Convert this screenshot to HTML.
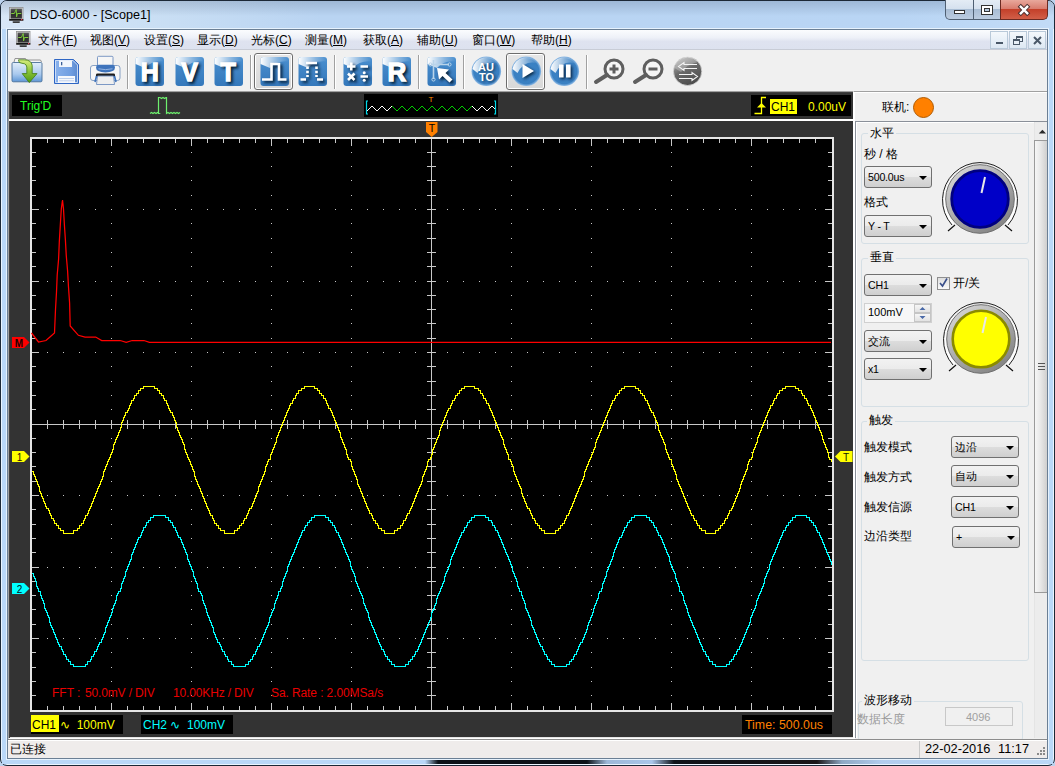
<!DOCTYPE html>
<html><head><meta charset="utf-8">
<style>
*{box-sizing:border-box}
html,body{margin:0;padding:0;width:1055px;height:766px;overflow:hidden;font-family:"Liberation Sans",sans-serif;font-size:12px;color:#000}
body{position:relative;background:#bcd3ee}
.a{position:absolute}
.t{position:absolute;white-space:nowrap;line-height:14px}
#winborder{left:0;top:0;width:1055px;height:766px;border:1px solid #1c2836;border-radius:7px 7px 7px 7px;background:#bad8f8;box-shadow:inset 0 0 0 1px #eaf5ff}
#titlebar{left:1px;top:1px;width:1053px;height:28px;background:linear-gradient(rgba(60,80,110,0.22),rgba(60,80,110,0.12) 7px,rgba(60,80,110,0) 15px),linear-gradient(90deg,#d8e7f7,#cadff4 150px,#b9d4f2 320px,#b9d5f4 900px,#c2dbf6);border-radius:6px 6px 0 0}
#innerhl{left:6px;top:28px;width:1043px;height:732px;border:1px solid #e6f2fd}
.capbtn{position:absolute;top:0;height:20px;border:1px solid #4f5f72;border-top:none}
#mdi{left:7px;top:29px;width:1041px;height:730px;background:#f0f0f0;border:1px solid #6b7f94}
#menubar{left:8px;top:30px;width:1039px;height:20px;background:linear-gradient(#fbfcfe,#eef1f8 40%,#dfe3f0 60%,#dde2ef);border-bottom:1px solid #c8ccd6}
.mi{position:absolute;top:33px;font-size:12px;line-height:14px}
#toolbar{left:8px;top:50px;width:1039px;height:42px;background:#f0f0f0}
.sep{position:absolute;top:55px;width:1px;height:34px;background:#a0a0a0;box-shadow:1px 0 0 #fff}
.press{position:absolute;top:53px;height:37px;border:1px solid #6d6d6d;border-radius:3px;background:linear-gradient(#e6e6e6,#d8d8d8);box-shadow:inset 0 0 0 1px #fff}
#scope{left:8px;top:91px;width:846px;height:648px;background:#333333;border-left:1px solid #a0a0a0;border-top:1px solid #a0a0a0;border-right:1px solid #fff;border-bottom:1px solid #fff;box-shadow:inset 1px 1px 0 #404040,inset 0 -1px 0 #e4e4e4}
#panel{left:854px;top:91px;width:193px;height:648px;background:#f0f0f0;border-top:1px solid #a0a0a0;box-shadow:inset 1px 1px 0 #fff}
.gb{position:absolute;border:1px solid #d5dfe5;border-radius:3px}
.gbt{position:absolute;background:#f0f0f0;padding:0 2px;line-height:14px}
.cb{position:absolute;height:22px;border:1px solid #707070;border-radius:3px;background:linear-gradient(#f2f2f2,#ebebeb 50%,#dddddd 50%,#cfcfcf);font-size:10.6px;line-height:20px;padding-left:3px;color:#000;letter-spacing:-0.2px}
.cb:after{content:"";position:absolute;right:4px;top:9px;border-left:4px solid transparent;border-right:4px solid transparent;border-top:4px solid #000}
#status{left:8px;top:739px;width:1039px;height:19px;background:#efeceb;border-top:1px solid #8c8c8c;box-shadow:inset 0 1px 0 #fff}
</style></head><body>
<div class="a" id="winborder"></div>
<div class="a" id="titlebar"></div>
<div class="a" id="innerhl"></div>
<div class="a" style="left:2px;top:760px;width:1051px;height:4px;background:linear-gradient(90deg,#bad8f8 0,#bad8f8 423px,#0c1218 436px,#0c1218 585px,#9db8d8 605px,#a9c6ea 650px,#0e1319 672px,#1a1618 815px,#8ea8c4 840px,#b2cdee 880px,#bad8f8 1051px)"></div>
<!-- title icon -->
<svg class="a" style="left:9px;top:7px" width="15" height="17">
 <defs><linearGradient id="scr7" x1="0" y1="0" x2="0" y2="1"><stop offset="0" stop-color="#5a5a5a"/><stop offset="0.5" stop-color="#2a2a2a"/><stop offset="1" stop-color="#3a3a3a"/></linearGradient></defs>
 <rect x="0.5" y="0.5" width="13.5" height="13" fill="#d9d9d9" stroke="#8f8f8f" stroke-width="0.8"/>
 <rect x="1.6" y="1.6" width="11.3" height="10" fill="url(#scr7)"/>
 <rect x="0.3" y="12" width="14" height="1.6" fill="#151515"/>
 <rect x="12" y="12.1" width="1.3" height="1.1" fill="#ff4060"/>
 <rect x="3.5" y="14.3" width="7.5" height="1.6" rx="0.8" fill="#3a3a3a"/>
 <path d="M2.2 6.5 H5.3 L6.3 4.5 L7.2 2.5 L7.6 9.8 L8.4 6.5 H12.3" stroke="#7ecb3a" stroke-width="1" fill="none"/>
</svg>
<div class="t" style="left:30px;top:8px;font-size:12.6px;color:#000">DSO-6000 - [Scope1]</div>
<!-- caption buttons -->
<div class="capbtn" style="left:945px;width:29px;background:linear-gradient(#e4ecf5,#d4e0ee 50%,#a9bdd4 50%,#bccce0);border-radius:0 0 0 5px"></div>
<div class="capbtn" style="left:973px;width:28px;background:linear-gradient(#e4ecf5,#d4e0ee 50%,#a9bdd4 50%,#bccce0)"></div>
<div class="capbtn" style="left:1000px;width:48px;background:linear-gradient(#e8a89c,#d7786a 50%,#c4402a 50%,#d25f48);border-color:#6b2a22;border-radius:0 0 5px 0"></div>
<div class="a" style="left:954px;top:10px;width:11px;height:4px;background:#fff;border:1px solid #333"></div>
<div class="a" style="left:981px;top:5px;width:12px;height:10px;border:1px solid #333;background:#fff"><div class="a" style="left:2px;top:2px;width:6px;height:4px;border:1px solid #333;background:#b6c8dc"></div></div>
<svg class="a" style="left:1016px;top:3px" width="16" height="14"><path d="M4.8 3.8 L11.2 10.2 M11.2 3.8 L4.8 10.2" stroke="#4a3030" stroke-width="4.4" stroke-linecap="square"/><path d="M4.8 3.8 L11.2 10.2 M11.2 3.8 L4.8 10.2" stroke="#fff" stroke-width="2.4" stroke-linecap="square"/></svg>

<div class="a" id="mdi"></div>
<div class="a" id="menubar"></div>
<!-- menu icon -->
<svg class="a" style="left:16px;top:31px" width="15" height="17">
 <defs><linearGradient id="scr31" x1="0" y1="0" x2="0" y2="1"><stop offset="0" stop-color="#5a5a5a"/><stop offset="0.5" stop-color="#2a2a2a"/><stop offset="1" stop-color="#3a3a3a"/></linearGradient></defs>
 <rect x="0.5" y="0.5" width="13.5" height="13" fill="#d9d9d9" stroke="#8f8f8f" stroke-width="0.8"/>
 <rect x="1.6" y="1.6" width="11.3" height="10" fill="url(#scr31)"/>
 <rect x="0.3" y="12" width="14" height="1.6" fill="#151515"/>
 <rect x="12" y="12.1" width="1.3" height="1.1" fill="#ff4060"/>
 <rect x="3.5" y="14.3" width="7.5" height="1.6" rx="0.8" fill="#3a3a3a"/>
 <path d="M2.2 6.5 H5.3 L6.3 4.5 L7.2 2.5 L7.6 9.8 L8.4 6.5 H12.3" stroke="#7ecb3a" stroke-width="1" fill="none"/>
</svg>
<div class="mi" style="left:38px">文件(<u>F</u>)</div>
<div class="mi" style="left:90px">视图(<u>V</u>)</div>
<div class="mi" style="left:144px">设置(<u>S</u>)</div>
<div class="mi" style="left:197px">显示(<u>D</u>)</div>
<div class="mi" style="left:251px">光标(<u>C</u>)</div>
<div class="mi" style="left:305px">测量(<u>M</u>)</div>
<div class="mi" style="left:363px">获取(<u>A</u>)</div>
<div class="mi" style="left:417px">辅助(<u>U</u>)</div>
<div class="mi" style="left:472px">窗口(<u>W</u>)</div>
<div class="mi" style="left:531px">帮助(<u>H</u>)</div>
<!-- mdi buttons -->
<div class="a" style="left:990px;top:31px;width:18px;height:18px;border:1px solid #b9c9d9;background:linear-gradient(#f4f8fc,#dde8f3)"><div class="a" style="left:5px;top:10px;width:7px;height:2px;background:#4a5868"></div></div>
<div class="a" style="left:1009px;top:31px;width:18px;height:18px;border:1px solid #b9c9d9;background:linear-gradient(#f4f8fc,#dde8f3)"><div class="a" style="left:6px;top:4px;width:7px;height:6px;border:1px solid #4a5868;border-top-width:2px"></div><div class="a" style="left:3px;top:7px;width:7px;height:6px;border:1px solid #4a5868;border-top-width:2px;background:#e6eef6"></div></div>
<div class="a" style="left:1028px;top:31px;width:18px;height:18px;border:1px solid #b9c9d9;background:linear-gradient(#f4f8fc,#dde8f3)"><svg class="a" style="left:3px;top:3px" width="11" height="11"><path d="M2 2 L9 9 M9 2 L2 9" stroke="#4a5868" stroke-width="2"/></svg></div>

<div class="a" id="toolbar"></div>
<div class="press" style="left:254px;width:39px"></div>
<div class="press" style="left:506px;width:39px"></div>
<!-- open folder -->
<svg class="a" style="left:10px;top:55px" width="34" height="31">
 <defs><linearGradient id="fold" x1="0" y1="0" x2="0" y2="1"><stop offset="0" stop-color="#e2eefa"/><stop offset="0.6" stop-color="#a9c9ee"/><stop offset="1" stop-color="#5f97d6"/></linearGradient>
 <linearGradient id="grn" x1="0" y1="0" x2="0" y2="1"><stop offset="0" stop-color="#d8ee80"/><stop offset="0.5" stop-color="#8cc43a"/><stop offset="1" stop-color="#4e9a10"/></linearGradient></defs>
 <path d="M4 7 L5 3.5 H15.5 L16 5 H30.5 L31.5 7" fill="#f4f4f4" stroke="#8a8a8a" stroke-width="0.9"/>
 <rect x="2" y="7.5" width="30" height="19.3" rx="1.2" fill="url(#fold)" stroke="#4a6f98" stroke-width="0.9"/>
 <path d="M8.5 4.8 Q8.5 6 9.5 7.6 Q12 8.4 14.5 8.8 Q16.5 9.5 16.8 12 V18.6 H12.2 L19.3 27.6 L27 18.6 H22.2 V10.5 Q21.5 4.8 14 4.8 Z" fill="url(#grn)" stroke="#3f7a10" stroke-width="0.8"/>
</svg>
<!-- save -->
<svg class="a" style="left:54px;top:59px" width="26" height="26">
 <defs><linearGradient id="flp" x1="0" y1="0" x2="1" y2="0"><stop offset="0" stop-color="#8ab2ec"/><stop offset="0.7" stop-color="#6f9de0"/><stop offset="1" stop-color="#5a88cc"/></linearGradient></defs>
 <path d="M0.5 0.5 H19.5 L24.5 5.5 V24.5 H0.5 Z" fill="url(#flp)" stroke="#2f66c4"/>
 <path d="M1.5 1.5 H19 L23.5 6 V23.5 H1.5 Z" fill="none" stroke="#dce8fa" stroke-width="0.8"/>
 <rect x="5" y="1.3" width="13" height="6.7" fill="#f2f6fc"/>
 <rect x="7" y="3" width="1.3" height="3.3" fill="#3a5f98"/>
 <rect x="4" y="17" width="17" height="7" fill="#f6f8fc"/>
 <path d="M5 19.5 H20 M5 21.8 H20" stroke="#b8cbea" stroke-width="0.9"/>
</svg>
<!-- printer -->
<svg class="a" style="left:89px;top:55px" width="33" height="31">
 <rect x="8.5" y="1.3" width="15.5" height="10.5" rx="1" fill="#f6f6f6" stroke="#6f8fbf" stroke-width="0.9"/>
 <rect x="1.5" y="10.5" width="29.5" height="15" rx="2.5" fill="#f7f7f7" stroke="#7b97c0" stroke-width="0.9"/>
 <path d="M7 12.5 Q7 10 9.5 9.8 H23.5 Q26 10 26 12.5 Q26 17.2 16.5 17.5 Q7 17.2 7 12.5 Z" fill="#3f74bc"/>
 <path d="M9.5 13.8 Q16.5 15.5 23.5 13.8" stroke="#9dbbe6" stroke-width="0.9" fill="none"/>
 <path d="M7 19.5 Q7 18.5 8.5 18.5 H24.5 Q26 18.5 26 19.5 V22 H7 Z" fill="#1e1e1e"/>
 <path d="M8.5 21 H24.5 L25.5 29.5 H7.5 Z" fill="#efefef" stroke="#6f8fbf" stroke-width="0.9"/>
 <path d="M7.5 21 L6 27 M25.5 21 L27 27" stroke="#3f74bc" stroke-width="1.6"/>
</svg>
<div class="sep" style="left:127px"></div>
<svg width="0" height="0" style="position:absolute"><defs>
<filter id="sh" x="-30%" y="-30%" width="160%" height="160%"><feGaussianBlur stdDeviation="1.6"/></filter>
<linearGradient id="gl" x1="0" y1="0" x2="1" y2="0"><stop offset="0" stop-color="#ffffff" stop-opacity="1"/><stop offset="0.6" stop-color="#ffffff" stop-opacity="0.35"/><stop offset="1" stop-color="#ffffff" stop-opacity="0"/></linearGradient>
<linearGradient id="bb" x1="0" y1="0" x2="0" y2="1"><stop offset="0" stop-color="#4a8fcf"/><stop offset="1" stop-color="#3478bb"/></linearGradient>
<radialGradient id="rb" cx="0.5" cy="0.5" r="0.5"><stop offset="0" stop-color="#3d84c6"/><stop offset="0.85" stop-color="#3a80c2"/><stop offset="1" stop-color="#8fbbe6"/></radialGradient>
</defs></svg><svg class="a" style="left:134px;top:56px" width="31" height="31">
  <rect x="1.5" y="1" width="28.5" height="29" rx="3" fill="url(#bb)"/>
  <path d="M1.5 4 Q1.5 1 4.5 1 H27 Q30 1 30 4 V5.5 Q18 4 11 12 L1.5 8 Z" fill="url(#gl)"/>
  <g filter="url(#sh)" opacity="1" transform="translate(2,2)"><text x="15.8" y="24.5" text-anchor="middle" font-family="Liberation Sans" font-weight="bold" font-size="25" fill="#04182e" stroke="#04182e" stroke-width="1.3">H</text></g>
  <text x="15.8" y="24.5" text-anchor="middle" font-family="Liberation Sans" font-weight="bold" font-size="25" fill="#fff" stroke="#fff" stroke-width="1.3">H</text>
 </svg><svg class="a" style="left:174px;top:56px" width="31" height="31">
  <rect x="1.5" y="1" width="28.5" height="29" rx="3" fill="url(#bb)"/>
  <path d="M1.5 4 Q1.5 1 4.5 1 H27 Q30 1 30 4 V5.5 Q18 4 11 12 L1.5 8 Z" fill="url(#gl)"/>
  <g filter="url(#sh)" opacity="1" transform="translate(2,2)"><text x="15.6" y="24.5" text-anchor="middle" font-family="Liberation Sans" font-weight="bold" font-size="25" fill="#04182e" stroke="#04182e" stroke-width="1.3">V</text></g>
  <text x="15.6" y="24.5" text-anchor="middle" font-family="Liberation Sans" font-weight="bold" font-size="25" fill="#fff" stroke="#fff" stroke-width="1.3">V</text>
 </svg><svg class="a" style="left:213px;top:56px" width="31" height="31">
  <rect x="1.5" y="1" width="28.5" height="29" rx="3" fill="url(#bb)"/>
  <path d="M1.5 4 Q1.5 1 4.5 1 H27 Q30 1 30 4 V5.5 Q18 4 11 12 L1.5 8 Z" fill="url(#gl)"/>
  <g filter="url(#sh)" opacity="1" transform="translate(2,2)"><text x="15.2" y="24.5" text-anchor="middle" font-family="Liberation Sans" font-weight="bold" font-size="25" fill="#04182e" stroke="#04182e" stroke-width="1.3">T</text></g>
  <text x="15.2" y="24.5" text-anchor="middle" font-family="Liberation Sans" font-weight="bold" font-size="25" fill="#fff" stroke="#fff" stroke-width="1.3">T</text>
 </svg><svg class="a" style="left:259px;top:56px" width="31" height="31">
  <rect x="1.5" y="1" width="28.5" height="29" rx="3" fill="url(#bb)"/>
  <path d="M1.5 4 Q1.5 1 4.5 1 H27 Q30 1 30 4 V5.5 Q18 4 11 12 L1.5 8 Z" fill="url(#gl)"/>
  <g filter="url(#sh)" opacity="1" transform="translate(2,2)"><path d="M3 23.5 H12.5 V8 H20 V23.5 H27.5" stroke="#04182e" stroke-width="2.6" fill="none"/></g>
  <path d="M3 23.5 H12.5 V8 H20 V23.5 H27.5" stroke="#fff" stroke-width="2.6" fill="none"/>
 </svg><svg class="a" style="left:297px;top:56px" width="31" height="31">
  <rect x="1.5" y="1" width="28.5" height="29" rx="3" fill="url(#bb)"/>
  <path d="M1.5 4 Q1.5 1 4.5 1 H27 Q30 1 30 4 V5.5 Q18 4 11 12 L1.5 8 Z" fill="url(#gl)"/>
  <g filter="url(#sh)" opacity="1" transform="translate(2,2)"><path d="M3.5 23.5 H9 M20 23.5 H26 M9 7 H20" stroke="#04182e" stroke-width="2.6" fill="none"/><path d="M10.5 10.5 V21 M19.5 10.5 V21" stroke="#04182e" stroke-width="2.6" stroke-dasharray="2.6 1.6" fill="none"/></g>
  <path d="M3.5 23.5 H9 M20 23.5 H26 M9 7 H20" stroke="#fff" stroke-width="2.6" fill="none"/><path d="M10.5 10.5 V21 M19.5 10.5 V21" stroke="#fff" stroke-width="2.6" stroke-dasharray="2.6 1.6" fill="none"/>
 </svg><svg class="a" style="left:342px;top:56px" width="31" height="31">
  <rect x="1.5" y="1" width="28.5" height="29" rx="3" fill="url(#bb)"/>
  <path d="M1.5 4 Q1.5 1 4.5 1 H27 Q30 1 30 4 V5.5 Q18 4 11 12 L1.5 8 Z" fill="url(#gl)"/>
  <g filter="url(#sh)" opacity="1" transform="translate(2,2)"><path d="M5 10.5 H13.5 M9.25 6.5 V14.5 M18.5 10.5 H26 M6 17.5 L12.5 24 M12.5 17.5 L6 24 M18.5 20.5 H26" stroke="#04182e" stroke-width="2.6" fill="none"/><circle cx="22.2" cy="16.8" r="1.5" fill="#04182e"/><circle cx="22.2" cy="24.2" r="1.5" fill="#04182e"/></g>
  <path d="M5 10.5 H13.5 M9.25 6.5 V14.5 M18.5 10.5 H26 M6 17.5 L12.5 24 M12.5 17.5 L6 24 M18.5 20.5 H26" stroke="#fff" stroke-width="2.6" fill="none"/><circle cx="22.2" cy="16.8" r="1.5" fill="#fff"/><circle cx="22.2" cy="24.2" r="1.5" fill="#fff"/>
 </svg><svg class="a" style="left:381px;top:56px" width="31" height="31">
  <rect x="1.5" y="1" width="28.5" height="29" rx="3" fill="url(#bb)"/>
  <path d="M1.5 4 Q1.5 1 4.5 1 H27 Q30 1 30 4 V5.5 Q18 4 11 12 L1.5 8 Z" fill="url(#gl)"/>
  <g filter="url(#sh)" opacity="1" transform="translate(2,2)"><text x="15.8" y="25" text-anchor="middle" font-family="Liberation Sans" font-weight="bold" font-size="26" fill="#04182e" stroke="#04182e" stroke-width="1.3">R</text></g>
  <text x="15.8" y="25" text-anchor="middle" font-family="Liberation Sans" font-weight="bold" font-size="26" fill="#fff" stroke="#fff" stroke-width="1.3">R</text>
 </svg><svg class="a" style="left:426px;top:56px" width="31" height="31">
  <rect x="1.5" y="1" width="28.5" height="29" rx="3" fill="url(#bb)"/>
  <path d="M1.5 4 Q1.5 1 4.5 1 H27 Q30 1 30 4 V5.5 Q18 4 11 12 L1.5 8 Z" fill="url(#gl)"/>
  <g filter="url(#sh)" opacity="1" transform="translate(2,2)"><path d="M11 12 L23 13.5 L19.5 17 L26.5 23.5 L23.5 26.5 L16.5 20 L13 23.5 Z" fill="#04182e"/></g>
  <path d="M7.5 4 V23 M5 8.5 H23" stroke="#b9d4ea" stroke-width="1.6" fill="none"/><circle cx="4.5" cy="8.5" r="1.6" fill="none" stroke="#b9d4ea"/><circle cx="23.5" cy="8.5" r="1.6" fill="none" stroke="#b9d4ea"/><circle cx="7.5" cy="23.5" r="1.6" fill="none" stroke="#b9d4ea"/><path d="M11 12 L23 13.5 L19.5 17 L26.5 23.5 L23.5 26.5 L16.5 20 L13 23.5 Z" fill="#fff"/>
 </svg>
<div class="sep" style="left:250px"></div>
<div class="sep" style="left:334px"></div>
<div class="sep" style="left:418px"></div>
<div class="sep" style="left:463px"></div>
<svg class="a" style="left:470px;top:55px" width="32" height="32">
  <circle cx="16.3" cy="16.2" r="14.8" fill="url(#rb)"/>
  <path d="M2.5 14 A14 14 0 0 1 28 8.5 Q20 6 14 10 Q10 13 7.5 18 Z" fill="url(#gl)"/>
  <g filter="url(#sh)" opacity="0.85" transform="translate(1.6,1.6)"><text x="16" y="15.5" text-anchor="middle" font-family="Liberation Sans" font-weight="bold" font-size="11" fill="#04182e">AU</text><text x="16.5" y="25.5" text-anchor="middle" font-family="Liberation Sans" font-weight="bold" font-size="11" fill="#04182e">TO</text></g>
  <text x="16" y="15.5" text-anchor="middle" font-family="Liberation Sans" font-weight="bold" font-size="11" fill="#fff">AU</text><text x="16.5" y="25.5" text-anchor="middle" font-family="Liberation Sans" font-weight="bold" font-size="11" fill="#fff">TO</text></svg><svg class="a" style="left:510px;top:55px" width="32" height="32">
  <circle cx="16.3" cy="16.2" r="14.8" fill="url(#rb)"/>
  <path d="M2.5 14 A14 14 0 0 1 28 8.5 Q20 6 14 10 Q10 13 7.5 18 Z" fill="url(#gl)"/>
  <g filter="url(#sh)" opacity="0.85" transform="translate(1.6,1.6)"><path d="M12.5 9 L24 16 L12.5 23 Z" fill="#04182e"/></g>
  <path d="M12.5 9 L24 16 L12.5 23 Z" fill="#fff"/></svg><svg class="a" style="left:548px;top:55px" width="32" height="32">
  <circle cx="16.3" cy="16.2" r="14.8" fill="url(#rb)"/>
  <path d="M2.5 14 A14 14 0 0 1 28 8.5 Q20 6 14 10 Q10 13 7.5 18 Z" fill="url(#gl)"/>
  <g filter="url(#sh)" opacity="0.85" transform="translate(1.6,1.6)"><rect x="11" y="9.5" width="4.6" height="13" fill="#04182e"/><rect x="18" y="9.5" width="4.6" height="13" fill="#04182e"/></g>
  <rect x="11" y="9.5" width="4.6" height="13" fill="#fff"/><rect x="18" y="9.5" width="4.6" height="13" fill="#fff"/></svg>
<div class="sep" style="left:586px"></div>
<!-- zoom in/out -->
<svg class="a" style="left:592px;top:55px" width="34" height="30">
 <circle cx="22" cy="14" r="9" fill="#f6f6f6" stroke="#5f5f5f" stroke-width="3"/>
 <path d="M4 27 L15 20" stroke="#5f5f5f" stroke-width="4" stroke-linecap="round"/>
 <path d="M17.5 14 H26.5 M22 9.5 V18.5" stroke="#5f5f5f" stroke-width="3"/>
</svg>
<svg class="a" style="left:631px;top:55px" width="34" height="30">
 <circle cx="22" cy="14" r="9" fill="#f6f6f6" stroke="#5f5f5f" stroke-width="3"/>
 <path d="M4 27 L15 20" stroke="#5f5f5f" stroke-width="4" stroke-linecap="round"/>
 <path d="M17.5 14 H26.5" stroke="#5f5f5f" stroke-width="3"/>
</svg>
<svg class="a" style="left:672px;top:55px" width="32" height="32">
 <defs><linearGradient id="gr" x1="0.2" y1="0" x2="0.7" y2="1"><stop offset="0" stop-color="#b8b8b8"/><stop offset="0.45" stop-color="#6a6a6a"/><stop offset="1" stop-color="#4a4a4a"/></linearGradient></defs>
 <circle cx="15.6" cy="16.3" r="14.2" fill="url(#gr)" stroke="#d8d8d8" stroke-width="0.8"/>
 <path d="M2.5 13 A13.5 13.5 0 0 1 26 7 Q16 9 9 17 Z" fill="#fff" opacity="0.25"/>
 <path d="M25 9.5 H12 V7.5 L6.5 11.5 L12 15.5 V13.5 H25" fill="none" stroke="#f4f4f4" stroke-width="1.1"/>
 <path d="M7 23.5 H20 V25.5 L25.5 21.5 L20 17.5 V19.5 H7" fill="none" stroke="#f4f4f4" stroke-width="1.1"/>
</svg>


<div class="a" id="scope"></div>
<div class="a" style="left:12px;top:95px;width:50px;height:21px;background:#000"></div>
<div class="t" style="left:20px;top:99px;color:#22ff22;font-size:12px">Trig'D</div>
<svg class="a" style="left:148px;top:94px" width="34" height="22"><path d="M2 19.5 L3.5 18.5 L5.0 19.5 L6.5 18.5 L8.0 19.5 L9.5 18.5 L11.0 19.5 L10.5 19.5 L10.5 3.5 L12.0 3.5 L13.5 4.5 L15.0 3.5 L16.5 4.5 L18.0 3.5 L18.5 3.5 L18.5 19.5 L20.0 18.5 L21.5 19.5 L23.0 18.5 L24.5 19.5 L26.0 18.5 L27.5 19.5 L29.0 18.5 L30.5 19.5 L32.0 18.5" stroke="#6ef06e" stroke-width="1.2" fill="none"/></svg>
<div class="a" style="left:364px;top:94px;width:134px;height:23px;background:#000"></div>
<svg class="a" style="left:364px;top:94px" width="134" height="23">
 <path d="M4 7 H2.5 V20 H4 M130 7 H131.5 V20 H130" stroke="#00d8e8" stroke-width="1.2" fill="none"/>
 <path d="M3 17 L8 12 L13 17 L18 12 L23 17 L28 12" stroke="#fff" fill="none" stroke-width="1"/>
 <path d="M28 12 L33 17 L38 12 L43 17 L48 12 L53 17 L58 12 L63 17 L68 12 L73 17 L78 12 L83 17 L88 12 L93 17 L98 12 L103 17 L108 12" stroke="#00d000" fill="none" stroke-width="1"/>
 <path d="M108 12 L113 17 L118 12 L123 17 L128 12 L131 15" stroke="#fff" fill="none" stroke-width="1"/>
 <text x="67" y="8" text-anchor="middle" font-family="Liberation Sans" font-size="8" fill="#ff8c00">T</text>
</svg>
<div class="a" style="left:751px;top:95px;width:100px;height:21px;background:#000"></div>
<svg class="a" style="left:751px;top:95px" width="20" height="21"><path d="M3.5 18.5 H10.5 V2.5 H15" stroke="#ffff00" stroke-width="1.3" fill="none"/><path d="M6 12.5 L10.5 8 L15 12.5 Z" fill="#ffff00"/></svg>
<div class="a" style="left:770px;top:99px;width:27px;height:15px;background:#ffff00"></div>
<div class="t" style="left:771px;top:100px;color:#000;font-size:12px">CH1</div>
<div class="t" style="left:808px;top:100px;color:#ffff00;font-size:12px">0.00uV</div>
<div class="a" style="left:9px;top:119px;width:844px;height:2px;background:#fff"></div>
<svg class="a" style="left:426px;top:122px" width="12" height="15"><path d="M0 0 H11.5 V10 L5.75 15 L0 10 Z" fill="#ff8000"/><text x="6" y="10" text-anchor="middle" font-family="Liberation Sans" font-size="10.5" fill="#000">T</text></svg>

<svg class="a" style="left:0;top:0" width="1055" height="766">
<rect x="30" y="137" width="804" height="575" fill="#000"/>
<path d="M30 137h804v2h-804z M30 710h804v2h-804z M30 137h2v575h-2z M832 137h2v575h-2z" fill="#e6e6e6"/>
<path d="M32 424h800v1h-800zM431 139h1v571h-1zM47 139h1v4h-1zM47 706h1v4h-1zM47 420h1v9h-1zM63 139h1v4h-1zM63 706h1v4h-1zM63 420h1v9h-1zM79 139h1v4h-1zM79 706h1v4h-1zM79 420h1v9h-1zM95 139h1v4h-1zM95 706h1v4h-1zM95 420h1v9h-1zM111 139h1v7h-1zM111 703h1v7h-1zM111 420h1v9h-1zM127 139h1v4h-1zM127 706h1v4h-1zM127 420h1v9h-1zM143 139h1v4h-1zM143 706h1v4h-1zM143 420h1v9h-1zM159 139h1v4h-1zM159 706h1v4h-1zM159 420h1v9h-1zM175 139h1v4h-1zM175 706h1v4h-1zM175 420h1v9h-1zM191 139h1v7h-1zM191 703h1v7h-1zM191 420h1v9h-1zM207 139h1v4h-1zM207 706h1v4h-1zM207 420h1v9h-1zM223 139h1v4h-1zM223 706h1v4h-1zM223 420h1v9h-1zM239 139h1v4h-1zM239 706h1v4h-1zM239 420h1v9h-1zM255 139h1v4h-1zM255 706h1v4h-1zM255 420h1v9h-1zM271 139h1v7h-1zM271 703h1v7h-1zM271 420h1v9h-1zM287 139h1v4h-1zM287 706h1v4h-1zM287 420h1v9h-1zM303 139h1v4h-1zM303 706h1v4h-1zM303 420h1v9h-1zM319 139h1v4h-1zM319 706h1v4h-1zM319 420h1v9h-1zM335 139h1v4h-1zM335 706h1v4h-1zM335 420h1v9h-1zM351 139h1v7h-1zM351 703h1v7h-1zM351 420h1v9h-1zM367 139h1v4h-1zM367 706h1v4h-1zM367 420h1v9h-1zM383 139h1v4h-1zM383 706h1v4h-1zM383 420h1v9h-1zM399 139h1v4h-1zM399 706h1v4h-1zM399 420h1v9h-1zM415 139h1v4h-1zM415 706h1v4h-1zM415 420h1v9h-1zM431 139h1v7h-1zM431 703h1v7h-1zM431 420h1v9h-1zM447 139h1v4h-1zM447 706h1v4h-1zM447 420h1v9h-1zM463 139h1v4h-1zM463 706h1v4h-1zM463 420h1v9h-1zM479 139h1v4h-1zM479 706h1v4h-1zM479 420h1v9h-1zM495 139h1v4h-1zM495 706h1v4h-1zM495 420h1v9h-1zM511 139h1v7h-1zM511 703h1v7h-1zM511 420h1v9h-1zM527 139h1v4h-1zM527 706h1v4h-1zM527 420h1v9h-1zM543 139h1v4h-1zM543 706h1v4h-1zM543 420h1v9h-1zM559 139h1v4h-1zM559 706h1v4h-1zM559 420h1v9h-1zM575 139h1v4h-1zM575 706h1v4h-1zM575 420h1v9h-1zM591 139h1v7h-1zM591 703h1v7h-1zM591 420h1v9h-1zM607 139h1v4h-1zM607 706h1v4h-1zM607 420h1v9h-1zM623 139h1v4h-1zM623 706h1v4h-1zM623 420h1v9h-1zM639 139h1v4h-1zM639 706h1v4h-1zM639 420h1v9h-1zM655 139h1v4h-1zM655 706h1v4h-1zM655 420h1v9h-1zM671 139h1v7h-1zM671 703h1v7h-1zM671 420h1v9h-1zM687 139h1v4h-1zM687 706h1v4h-1zM687 420h1v9h-1zM703 139h1v4h-1zM703 706h1v4h-1zM703 420h1v9h-1zM719 139h1v4h-1zM719 706h1v4h-1zM719 420h1v9h-1zM735 139h1v4h-1zM735 706h1v4h-1zM735 420h1v9h-1zM751 139h1v7h-1zM751 703h1v7h-1zM751 420h1v9h-1zM767 139h1v4h-1zM767 706h1v4h-1zM767 420h1v9h-1zM783 139h1v4h-1zM783 706h1v4h-1zM783 420h1v9h-1zM799 139h1v4h-1zM799 706h1v4h-1zM799 420h1v9h-1zM815 139h1v4h-1zM815 706h1v4h-1zM815 420h1v9h-1zM32 152h4v1h-4zM828 152h4v1h-4zM427 152h9v1h-9zM32 166h4v1h-4zM828 166h4v1h-4zM427 166h9v1h-9zM32 180h4v1h-4zM828 180h4v1h-4zM427 180h9v1h-9zM32 195h4v1h-4zM828 195h4v1h-4zM427 195h9v1h-9zM32 209h7v1h-7zM825 209h7v1h-7zM427 209h9v1h-9zM32 223h4v1h-4zM828 223h4v1h-4zM427 223h9v1h-9zM32 238h4v1h-4zM828 238h4v1h-4zM427 238h9v1h-9zM32 252h4v1h-4zM828 252h4v1h-4zM427 252h9v1h-9zM32 266h4v1h-4zM828 266h4v1h-4zM427 266h9v1h-9zM32 281h7v1h-7zM825 281h7v1h-7zM427 281h9v1h-9zM32 295h4v1h-4zM828 295h4v1h-4zM427 295h9v1h-9zM32 309h4v1h-4zM828 309h4v1h-4zM427 309h9v1h-9zM32 323h4v1h-4zM828 323h4v1h-4zM427 323h9v1h-9zM32 338h4v1h-4zM828 338h4v1h-4zM427 338h9v1h-9zM32 352h7v1h-7zM825 352h7v1h-7zM427 352h9v1h-9zM32 366h4v1h-4zM828 366h4v1h-4zM427 366h9v1h-9zM32 381h4v1h-4zM828 381h4v1h-4zM427 381h9v1h-9zM32 395h4v1h-4zM828 395h4v1h-4zM427 395h9v1h-9zM32 409h4v1h-4zM828 409h4v1h-4zM427 409h9v1h-9zM32 424h7v1h-7zM825 424h7v1h-7zM427 424h9v1h-9zM32 438h4v1h-4zM828 438h4v1h-4zM427 438h9v1h-9zM32 452h4v1h-4zM828 452h4v1h-4zM427 452h9v1h-9zM32 466h4v1h-4zM828 466h4v1h-4zM427 466h9v1h-9zM32 481h4v1h-4zM828 481h4v1h-4zM427 481h9v1h-9zM32 495h7v1h-7zM825 495h7v1h-7zM427 495h9v1h-9zM32 509h4v1h-4zM828 509h4v1h-4zM427 509h9v1h-9zM32 524h4v1h-4zM828 524h4v1h-4zM427 524h9v1h-9zM32 538h4v1h-4zM828 538h4v1h-4zM427 538h9v1h-9zM32 552h4v1h-4zM828 552h4v1h-4zM427 552h9v1h-9zM32 567h7v1h-7zM825 567h7v1h-7zM427 567h9v1h-9zM32 581h4v1h-4zM828 581h4v1h-4zM427 581h9v1h-9zM32 595h4v1h-4zM828 595h4v1h-4zM427 595h9v1h-9zM32 609h4v1h-4zM828 609h4v1h-4zM427 609h9v1h-9zM32 624h4v1h-4zM828 624h4v1h-4zM427 624h9v1h-9zM32 638h7v1h-7zM825 638h7v1h-7zM427 638h9v1h-9zM32 652h4v1h-4zM828 652h4v1h-4zM427 652h9v1h-9zM32 667h4v1h-4zM828 667h4v1h-4zM427 667h9v1h-9zM32 681h4v1h-4zM828 681h4v1h-4zM427 681h9v1h-9zM32 695h4v1h-4zM828 695h4v1h-4zM427 695h9v1h-9zM111 152h1v1h-1zM111 166h1v1h-1zM111 180h1v1h-1zM111 195h1v1h-1zM111 209h1v1h-1zM111 223h1v1h-1zM111 238h1v1h-1zM111 252h1v1h-1zM111 266h1v1h-1zM111 281h1v1h-1zM111 295h1v1h-1zM111 309h1v1h-1zM111 323h1v1h-1zM111 338h1v1h-1zM111 352h1v1h-1zM111 366h1v1h-1zM111 381h1v1h-1zM111 395h1v1h-1zM111 409h1v1h-1zM111 424h1v1h-1zM111 438h1v1h-1zM111 452h1v1h-1zM111 466h1v1h-1zM111 481h1v1h-1zM111 495h1v1h-1zM111 509h1v1h-1zM111 524h1v1h-1zM111 538h1v1h-1zM111 552h1v1h-1zM111 567h1v1h-1zM111 581h1v1h-1zM111 595h1v1h-1zM111 609h1v1h-1zM111 624h1v1h-1zM111 638h1v1h-1zM111 652h1v1h-1zM111 667h1v1h-1zM111 681h1v1h-1zM111 695h1v1h-1zM191 152h1v1h-1zM191 166h1v1h-1zM191 180h1v1h-1zM191 195h1v1h-1zM191 209h1v1h-1zM191 223h1v1h-1zM191 238h1v1h-1zM191 252h1v1h-1zM191 266h1v1h-1zM191 281h1v1h-1zM191 295h1v1h-1zM191 309h1v1h-1zM191 323h1v1h-1zM191 338h1v1h-1zM191 352h1v1h-1zM191 366h1v1h-1zM191 381h1v1h-1zM191 395h1v1h-1zM191 409h1v1h-1zM191 424h1v1h-1zM191 438h1v1h-1zM191 452h1v1h-1zM191 466h1v1h-1zM191 481h1v1h-1zM191 495h1v1h-1zM191 509h1v1h-1zM191 524h1v1h-1zM191 538h1v1h-1zM191 552h1v1h-1zM191 567h1v1h-1zM191 581h1v1h-1zM191 595h1v1h-1zM191 609h1v1h-1zM191 624h1v1h-1zM191 638h1v1h-1zM191 652h1v1h-1zM191 667h1v1h-1zM191 681h1v1h-1zM191 695h1v1h-1zM271 152h1v1h-1zM271 166h1v1h-1zM271 180h1v1h-1zM271 195h1v1h-1zM271 209h1v1h-1zM271 223h1v1h-1zM271 238h1v1h-1zM271 252h1v1h-1zM271 266h1v1h-1zM271 281h1v1h-1zM271 295h1v1h-1zM271 309h1v1h-1zM271 323h1v1h-1zM271 338h1v1h-1zM271 352h1v1h-1zM271 366h1v1h-1zM271 381h1v1h-1zM271 395h1v1h-1zM271 409h1v1h-1zM271 424h1v1h-1zM271 438h1v1h-1zM271 452h1v1h-1zM271 466h1v1h-1zM271 481h1v1h-1zM271 495h1v1h-1zM271 509h1v1h-1zM271 524h1v1h-1zM271 538h1v1h-1zM271 552h1v1h-1zM271 567h1v1h-1zM271 581h1v1h-1zM271 595h1v1h-1zM271 609h1v1h-1zM271 624h1v1h-1zM271 638h1v1h-1zM271 652h1v1h-1zM271 667h1v1h-1zM271 681h1v1h-1zM271 695h1v1h-1zM351 152h1v1h-1zM351 166h1v1h-1zM351 180h1v1h-1zM351 195h1v1h-1zM351 209h1v1h-1zM351 223h1v1h-1zM351 238h1v1h-1zM351 252h1v1h-1zM351 266h1v1h-1zM351 281h1v1h-1zM351 295h1v1h-1zM351 309h1v1h-1zM351 323h1v1h-1zM351 338h1v1h-1zM351 352h1v1h-1zM351 366h1v1h-1zM351 381h1v1h-1zM351 395h1v1h-1zM351 409h1v1h-1zM351 424h1v1h-1zM351 438h1v1h-1zM351 452h1v1h-1zM351 466h1v1h-1zM351 481h1v1h-1zM351 495h1v1h-1zM351 509h1v1h-1zM351 524h1v1h-1zM351 538h1v1h-1zM351 552h1v1h-1zM351 567h1v1h-1zM351 581h1v1h-1zM351 595h1v1h-1zM351 609h1v1h-1zM351 624h1v1h-1zM351 638h1v1h-1zM351 652h1v1h-1zM351 667h1v1h-1zM351 681h1v1h-1zM351 695h1v1h-1zM511 152h1v1h-1zM511 166h1v1h-1zM511 180h1v1h-1zM511 195h1v1h-1zM511 209h1v1h-1zM511 223h1v1h-1zM511 238h1v1h-1zM511 252h1v1h-1zM511 266h1v1h-1zM511 281h1v1h-1zM511 295h1v1h-1zM511 309h1v1h-1zM511 323h1v1h-1zM511 338h1v1h-1zM511 352h1v1h-1zM511 366h1v1h-1zM511 381h1v1h-1zM511 395h1v1h-1zM511 409h1v1h-1zM511 424h1v1h-1zM511 438h1v1h-1zM511 452h1v1h-1zM511 466h1v1h-1zM511 481h1v1h-1zM511 495h1v1h-1zM511 509h1v1h-1zM511 524h1v1h-1zM511 538h1v1h-1zM511 552h1v1h-1zM511 567h1v1h-1zM511 581h1v1h-1zM511 595h1v1h-1zM511 609h1v1h-1zM511 624h1v1h-1zM511 638h1v1h-1zM511 652h1v1h-1zM511 667h1v1h-1zM511 681h1v1h-1zM511 695h1v1h-1zM591 152h1v1h-1zM591 166h1v1h-1zM591 180h1v1h-1zM591 195h1v1h-1zM591 209h1v1h-1zM591 223h1v1h-1zM591 238h1v1h-1zM591 252h1v1h-1zM591 266h1v1h-1zM591 281h1v1h-1zM591 295h1v1h-1zM591 309h1v1h-1zM591 323h1v1h-1zM591 338h1v1h-1zM591 352h1v1h-1zM591 366h1v1h-1zM591 381h1v1h-1zM591 395h1v1h-1zM591 409h1v1h-1zM591 424h1v1h-1zM591 438h1v1h-1zM591 452h1v1h-1zM591 466h1v1h-1zM591 481h1v1h-1zM591 495h1v1h-1zM591 509h1v1h-1zM591 524h1v1h-1zM591 538h1v1h-1zM591 552h1v1h-1zM591 567h1v1h-1zM591 581h1v1h-1zM591 595h1v1h-1zM591 609h1v1h-1zM591 624h1v1h-1zM591 638h1v1h-1zM591 652h1v1h-1zM591 667h1v1h-1zM591 681h1v1h-1zM591 695h1v1h-1zM671 152h1v1h-1zM671 166h1v1h-1zM671 180h1v1h-1zM671 195h1v1h-1zM671 209h1v1h-1zM671 223h1v1h-1zM671 238h1v1h-1zM671 252h1v1h-1zM671 266h1v1h-1zM671 281h1v1h-1zM671 295h1v1h-1zM671 309h1v1h-1zM671 323h1v1h-1zM671 338h1v1h-1zM671 352h1v1h-1zM671 366h1v1h-1zM671 381h1v1h-1zM671 395h1v1h-1zM671 409h1v1h-1zM671 424h1v1h-1zM671 438h1v1h-1zM671 452h1v1h-1zM671 466h1v1h-1zM671 481h1v1h-1zM671 495h1v1h-1zM671 509h1v1h-1zM671 524h1v1h-1zM671 538h1v1h-1zM671 552h1v1h-1zM671 567h1v1h-1zM671 581h1v1h-1zM671 595h1v1h-1zM671 609h1v1h-1zM671 624h1v1h-1zM671 638h1v1h-1zM671 652h1v1h-1zM671 667h1v1h-1zM671 681h1v1h-1zM671 695h1v1h-1zM751 152h1v1h-1zM751 166h1v1h-1zM751 180h1v1h-1zM751 195h1v1h-1zM751 209h1v1h-1zM751 223h1v1h-1zM751 238h1v1h-1zM751 252h1v1h-1zM751 266h1v1h-1zM751 281h1v1h-1zM751 295h1v1h-1zM751 309h1v1h-1zM751 323h1v1h-1zM751 338h1v1h-1zM751 352h1v1h-1zM751 366h1v1h-1zM751 381h1v1h-1zM751 395h1v1h-1zM751 409h1v1h-1zM751 424h1v1h-1zM751 438h1v1h-1zM751 452h1v1h-1zM751 466h1v1h-1zM751 481h1v1h-1zM751 495h1v1h-1zM751 509h1v1h-1zM751 524h1v1h-1zM751 538h1v1h-1zM751 552h1v1h-1zM751 567h1v1h-1zM751 581h1v1h-1zM751 595h1v1h-1zM751 609h1v1h-1zM751 624h1v1h-1zM751 638h1v1h-1zM751 652h1v1h-1zM751 667h1v1h-1zM751 681h1v1h-1zM751 695h1v1h-1zM47 209h1v1h-1zM63 209h1v1h-1zM79 209h1v1h-1zM95 209h1v1h-1zM111 209h1v1h-1zM127 209h1v1h-1zM143 209h1v1h-1zM159 209h1v1h-1zM175 209h1v1h-1zM191 209h1v1h-1zM207 209h1v1h-1zM223 209h1v1h-1zM239 209h1v1h-1zM255 209h1v1h-1zM271 209h1v1h-1zM287 209h1v1h-1zM303 209h1v1h-1zM319 209h1v1h-1zM335 209h1v1h-1zM351 209h1v1h-1zM367 209h1v1h-1zM383 209h1v1h-1zM399 209h1v1h-1zM415 209h1v1h-1zM431 209h1v1h-1zM447 209h1v1h-1zM463 209h1v1h-1zM479 209h1v1h-1zM495 209h1v1h-1zM511 209h1v1h-1zM527 209h1v1h-1zM543 209h1v1h-1zM559 209h1v1h-1zM575 209h1v1h-1zM591 209h1v1h-1zM607 209h1v1h-1zM623 209h1v1h-1zM639 209h1v1h-1zM655 209h1v1h-1zM671 209h1v1h-1zM687 209h1v1h-1zM703 209h1v1h-1zM719 209h1v1h-1zM735 209h1v1h-1zM751 209h1v1h-1zM767 209h1v1h-1zM783 209h1v1h-1zM799 209h1v1h-1zM815 209h1v1h-1zM47 281h1v1h-1zM63 281h1v1h-1zM79 281h1v1h-1zM95 281h1v1h-1zM111 281h1v1h-1zM127 281h1v1h-1zM143 281h1v1h-1zM159 281h1v1h-1zM175 281h1v1h-1zM191 281h1v1h-1zM207 281h1v1h-1zM223 281h1v1h-1zM239 281h1v1h-1zM255 281h1v1h-1zM271 281h1v1h-1zM287 281h1v1h-1zM303 281h1v1h-1zM319 281h1v1h-1zM335 281h1v1h-1zM351 281h1v1h-1zM367 281h1v1h-1zM383 281h1v1h-1zM399 281h1v1h-1zM415 281h1v1h-1zM431 281h1v1h-1zM447 281h1v1h-1zM463 281h1v1h-1zM479 281h1v1h-1zM495 281h1v1h-1zM511 281h1v1h-1zM527 281h1v1h-1zM543 281h1v1h-1zM559 281h1v1h-1zM575 281h1v1h-1zM591 281h1v1h-1zM607 281h1v1h-1zM623 281h1v1h-1zM639 281h1v1h-1zM655 281h1v1h-1zM671 281h1v1h-1zM687 281h1v1h-1zM703 281h1v1h-1zM719 281h1v1h-1zM735 281h1v1h-1zM751 281h1v1h-1zM767 281h1v1h-1zM783 281h1v1h-1zM799 281h1v1h-1zM815 281h1v1h-1zM47 352h1v1h-1zM63 352h1v1h-1zM79 352h1v1h-1zM95 352h1v1h-1zM111 352h1v1h-1zM127 352h1v1h-1zM143 352h1v1h-1zM159 352h1v1h-1zM175 352h1v1h-1zM191 352h1v1h-1zM207 352h1v1h-1zM223 352h1v1h-1zM239 352h1v1h-1zM255 352h1v1h-1zM271 352h1v1h-1zM287 352h1v1h-1zM303 352h1v1h-1zM319 352h1v1h-1zM335 352h1v1h-1zM351 352h1v1h-1zM367 352h1v1h-1zM383 352h1v1h-1zM399 352h1v1h-1zM415 352h1v1h-1zM431 352h1v1h-1zM447 352h1v1h-1zM463 352h1v1h-1zM479 352h1v1h-1zM495 352h1v1h-1zM511 352h1v1h-1zM527 352h1v1h-1zM543 352h1v1h-1zM559 352h1v1h-1zM575 352h1v1h-1zM591 352h1v1h-1zM607 352h1v1h-1zM623 352h1v1h-1zM639 352h1v1h-1zM655 352h1v1h-1zM671 352h1v1h-1zM687 352h1v1h-1zM703 352h1v1h-1zM719 352h1v1h-1zM735 352h1v1h-1zM751 352h1v1h-1zM767 352h1v1h-1zM783 352h1v1h-1zM799 352h1v1h-1zM815 352h1v1h-1zM47 495h1v1h-1zM63 495h1v1h-1zM79 495h1v1h-1zM95 495h1v1h-1zM111 495h1v1h-1zM127 495h1v1h-1zM143 495h1v1h-1zM159 495h1v1h-1zM175 495h1v1h-1zM191 495h1v1h-1zM207 495h1v1h-1zM223 495h1v1h-1zM239 495h1v1h-1zM255 495h1v1h-1zM271 495h1v1h-1zM287 495h1v1h-1zM303 495h1v1h-1zM319 495h1v1h-1zM335 495h1v1h-1zM351 495h1v1h-1zM367 495h1v1h-1zM383 495h1v1h-1zM399 495h1v1h-1zM415 495h1v1h-1zM431 495h1v1h-1zM447 495h1v1h-1zM463 495h1v1h-1zM479 495h1v1h-1zM495 495h1v1h-1zM511 495h1v1h-1zM527 495h1v1h-1zM543 495h1v1h-1zM559 495h1v1h-1zM575 495h1v1h-1zM591 495h1v1h-1zM607 495h1v1h-1zM623 495h1v1h-1zM639 495h1v1h-1zM655 495h1v1h-1zM671 495h1v1h-1zM687 495h1v1h-1zM703 495h1v1h-1zM719 495h1v1h-1zM735 495h1v1h-1zM751 495h1v1h-1zM767 495h1v1h-1zM783 495h1v1h-1zM799 495h1v1h-1zM815 495h1v1h-1zM47 567h1v1h-1zM63 567h1v1h-1zM79 567h1v1h-1zM95 567h1v1h-1zM111 567h1v1h-1zM127 567h1v1h-1zM143 567h1v1h-1zM159 567h1v1h-1zM175 567h1v1h-1zM191 567h1v1h-1zM207 567h1v1h-1zM223 567h1v1h-1zM239 567h1v1h-1zM255 567h1v1h-1zM271 567h1v1h-1zM287 567h1v1h-1zM303 567h1v1h-1zM319 567h1v1h-1zM335 567h1v1h-1zM351 567h1v1h-1zM367 567h1v1h-1zM383 567h1v1h-1zM399 567h1v1h-1zM415 567h1v1h-1zM431 567h1v1h-1zM447 567h1v1h-1zM463 567h1v1h-1zM479 567h1v1h-1zM495 567h1v1h-1zM511 567h1v1h-1zM527 567h1v1h-1zM543 567h1v1h-1zM559 567h1v1h-1zM575 567h1v1h-1zM591 567h1v1h-1zM607 567h1v1h-1zM623 567h1v1h-1zM639 567h1v1h-1zM655 567h1v1h-1zM671 567h1v1h-1zM687 567h1v1h-1zM703 567h1v1h-1zM719 567h1v1h-1zM735 567h1v1h-1zM751 567h1v1h-1zM767 567h1v1h-1zM783 567h1v1h-1zM799 567h1v1h-1zM815 567h1v1h-1zM47 638h1v1h-1zM63 638h1v1h-1zM79 638h1v1h-1zM95 638h1v1h-1zM111 638h1v1h-1zM127 638h1v1h-1zM143 638h1v1h-1zM159 638h1v1h-1zM175 638h1v1h-1zM191 638h1v1h-1zM207 638h1v1h-1zM223 638h1v1h-1zM239 638h1v1h-1zM255 638h1v1h-1zM271 638h1v1h-1zM287 638h1v1h-1zM303 638h1v1h-1zM319 638h1v1h-1zM335 638h1v1h-1zM351 638h1v1h-1zM367 638h1v1h-1zM383 638h1v1h-1zM399 638h1v1h-1zM415 638h1v1h-1zM431 638h1v1h-1zM447 638h1v1h-1zM463 638h1v1h-1zM479 638h1v1h-1zM495 638h1v1h-1zM511 638h1v1h-1zM527 638h1v1h-1zM543 638h1v1h-1zM559 638h1v1h-1zM575 638h1v1h-1zM591 638h1v1h-1zM607 638h1v1h-1zM623 638h1v1h-1zM639 638h1v1h-1zM655 638h1v1h-1zM671 638h1v1h-1zM687 638h1v1h-1zM703 638h1v1h-1zM719 638h1v1h-1zM735 638h1v1h-1zM751 638h1v1h-1zM767 638h1v1h-1zM783 638h1v1h-1zM799 638h1v1h-1zM815 638h1v1h-1z" fill="#c8c8c8"/>
<path d="M32.0 471.5H33.0V474.5H34.0V476.5H35.0V479.5H36.0V481.5H37.0V484.5H38.0V486.5H39.0V491.5H40.0V493.5H41.0V496.5H42.0V498.5H43.0V501.5H44.0V503.5H45.0V506.5H46.0V508.5H48.0V510.5H49.0V513.5H50.0V515.5H51.0V518.5H53.0V520.5H54.0V523.5H56.0V525.5H58.0V528.5H60.0V530.5H63.0V533.5H73.0V530.5H77.0V528.5H79.0V525.5H81.0V523.5H83.0V520.5H84.0V518.5H85.0V515.5H87.0V513.5H88.0V510.5H89.0V508.5H90.0V506.5H91.0V503.5H92.0V501.5H93.0V498.5H94.0V496.5H95.0V493.5H96.0V491.5H97.0V488.5H98.0V486.5H99.0V484.5H100.0V481.5H101.0V479.5H102.0V476.5H103.0V471.5H104.0V469.5H105.0V466.5H106.0V464.5H107.0V461.5H108.0V459.5H109.0V457.5H110.0V454.5H111.0V452.5H112.0V449.5H113.0V444.5H114.0V442.5H115.0V439.5H116.0V437.5H117.0V435.5H118.0V432.5H119.0V430.5H120.0V427.5H121.0V422.5H122.0V420.5H123.0V417.5H124.0V415.5H125.0V412.5H127.0V410.5H128.0V408.5H129.0V405.5H130.0V403.5H131.0V400.5H133.0V398.5H134.0V395.5H136.0V393.5H138.0V390.5H140.0V388.5H143.0V386.5H154.0V388.5H157.0V390.5H159.0V393.5H161.0V395.5H163.0V398.5H164.0V400.5H166.0V403.5H167.0V405.5H168.0V408.5H169.0V410.5H170.0V412.5H172.0V415.5H173.0V417.5H174.0V420.5H175.0V422.5H176.0V427.5H177.0V430.5H178.0V432.5H179.0V435.5H180.0V437.5H181.0V439.5H182.0V442.5H183.0V444.5H184.0V449.5H185.0V452.5H186.0V454.5H187.0V457.5H188.0V459.5H189.0V461.5H190.0V464.5H191.0V466.5H192.0V469.5H193.0V471.5H194.0V476.5H195.0V479.5H196.0V481.5H197.0V484.5H198.0V486.5H199.0V488.5H200.0V491.5H201.0V493.5H202.0V496.5H203.0V498.5H204.0V501.5H205.0V503.5H206.0V506.5H207.0V508.5H208.0V510.5H209.0V513.5H210.0V515.5H212.0V518.5H213.0V520.5H214.0V523.5H216.0V525.5H218.0V528.5H220.0V530.5H224.0V533.5H234.0V530.5H237.0V528.5H239.0V525.5H241.0V523.5H243.0V520.5H244.0V518.5H246.0V515.5H247.0V513.5H248.0V510.5H249.0V508.5H251.0V506.5H252.0V503.5H253.0V501.5H254.0V498.5H255.0V496.5H256.0V493.5H257.0V491.5H258.0V486.5H259.0V484.5H260.0V481.5H261.0V479.5H262.0V476.5H263.0V474.5H264.0V471.5H265.0V466.5H266.0V464.5H267.0V461.5H268.0V459.5H270.0V454.5H271.0V452.5H272.0V449.5H273.0V447.5H274.0V444.5H275.0V442.5H276.0V437.5H277.0V435.5H278.0V432.5H279.0V430.5H280.0V427.5H281.0V425.5H282.0V422.5H283.0V420.5H284.0V417.5H285.0V415.5H286.0V412.5H287.0V410.5H288.0V408.5H289.0V405.5H290.0V403.5H292.0V400.5H293.0V398.5H295.0V395.5H296.0V393.5H298.0V390.5H301.0V388.5H304.0V386.5H314.0V388.5H317.0V390.5H319.0V393.5H321.0V395.5H323.0V398.5H325.0V400.5H326.0V403.5H327.0V405.5H328.0V408.5H330.0V410.5H331.0V412.5H332.0V415.5H333.0V417.5H334.0V420.5H335.0V422.5H336.0V425.5H337.0V427.5H338.0V430.5H339.0V432.5H340.0V437.5H341.0V439.5H342.0V442.5H343.0V444.5H344.0V447.5H345.0V449.5H346.0V454.5H347.0V457.5H348.0V459.5H350.0V461.5H351.0V466.5H352.0V469.5H353.0V471.5H354.0V474.5H355.0V476.5H356.0V479.5H357.0V484.5H358.0V486.5H359.0V488.5H360.0V491.5H361.0V493.5H362.0V496.5H363.0V498.5H364.0V501.5H365.0V503.5H366.0V506.5H367.0V508.5H368.0V510.5H369.0V513.5H371.0V515.5H372.0V518.5H373.0V520.5H375.0V523.5H377.0V525.5H378.0V528.5H381.0V530.5H384.0V533.5H394.0V530.5H397.0V528.5H400.0V525.5H402.0V523.5H403.0V520.5H405.0V518.5H406.0V515.5H407.0V513.5H409.0V510.5H410.0V508.5H411.0V506.5H412.0V503.5H413.0V501.5H414.0V498.5H415.0V496.5H416.0V493.5H417.0V491.5H418.0V488.5H419.0V486.5H420.0V484.5H421.0V481.5H422.0V476.5H423.0V474.5H424.0V471.5H425.0V469.5H426.0V466.5H427.0V461.5H428.0V459.5H430.0V457.5H431.0V454.5H432.0V449.5H433.0V447.5H434.0V444.5H435.0V442.5H436.0V439.5H437.0V437.5H438.0V435.5H439.0V430.5H440.0V427.5H441.0V425.5H442.0V422.5H443.0V420.5H444.0V417.5H445.0V415.5H446.0V412.5H447.0V410.5H448.0V408.5H450.0V405.5H451.0V403.5H452.0V400.5H454.0V398.5H455.0V395.5H457.0V393.5H459.0V390.5H461.0V388.5H464.0V386.5H474.0V388.5H478.0V390.5H480.0V393.5H482.0V395.5H483.0V398.5H485.0V400.5H486.0V403.5H488.0V405.5H489.0V408.5H490.0V410.5H491.0V412.5H492.0V415.5H493.0V417.5H494.0V420.5H495.0V422.5H496.0V425.5H497.0V427.5H498.0V430.5H499.0V432.5H500.0V435.5H501.0V437.5H502.0V439.5H503.0V444.5H504.0V447.5H505.0V449.5H506.0V452.5H507.0V454.5H508.0V459.5H510.0V461.5H511.0V464.5H512.0V466.5H513.0V471.5H514.0V474.5H515.0V476.5H516.0V479.5H517.0V481.5H518.0V484.5H519.0V486.5H520.0V488.5H521.0V493.5H522.0V496.5H523.0V498.5H524.0V501.5H525.0V503.5H526.0V506.5H527.0V508.5H529.0V510.5H530.0V513.5H531.0V515.5H532.0V518.5H534.0V520.5H535.0V523.5H537.0V525.5H539.0V528.5H541.0V530.5H544.0V533.5H555.0V530.5H558.0V528.5H560.0V525.5H562.0V523.5H564.0V520.5H565.0V518.5H566.0V515.5H568.0V513.5H569.0V510.5H570.0V508.5H571.0V506.5H572.0V503.5H573.0V501.5H574.0V498.5H575.0V496.5H576.0V493.5H577.0V491.5H578.0V488.5H579.0V486.5H580.0V484.5H581.0V481.5H582.0V479.5H583.0V476.5H584.0V471.5H585.0V469.5H586.0V466.5H587.0V464.5H588.0V461.5H589.0V459.5H590.0V457.5H591.0V454.5H592.0V452.5H593.0V449.5H594.0V447.5H595.0V442.5H596.0V439.5H597.0V437.5H598.0V435.5H599.0V432.5H600.0V430.5H601.0V427.5H602.0V425.5H603.0V422.5H604.0V420.5H605.0V417.5H606.0V415.5H607.0V412.5H608.0V410.5H609.0V408.5H610.0V405.5H611.0V403.5H612.0V400.5H614.0V398.5H615.0V395.5H617.0V393.5H619.0V390.5H621.0V388.5H624.0V386.5H635.0V388.5H638.0V390.5H640.0V393.5H642.0V395.5H644.0V398.5H645.0V400.5H647.0V403.5H648.0V405.5H649.0V408.5H650.0V410.5H651.0V412.5H653.0V415.5H654.0V417.5H655.0V420.5H656.0V422.5H657.0V425.5H658.0V430.5H659.0V432.5H660.0V435.5H661.0V437.5H662.0V439.5H663.0V442.5H664.0V444.5H665.0V449.5H666.0V452.5H667.0V454.5H668.0V457.5H669.0V459.5H671.0V464.5H672.0V466.5H673.0V469.5H674.0V471.5H675.0V474.5H676.0V479.5H677.0V481.5H678.0V484.5H679.0V486.5H680.0V488.5H681.0V491.5H682.0V493.5H683.0V496.5H684.0V498.5H685.0V501.5H686.0V503.5H687.0V506.5H688.0V508.5H689.0V510.5H690.0V513.5H691.0V515.5H693.0V518.5H694.0V520.5H696.0V523.5H697.0V525.5H699.0V528.5H701.0V530.5H705.0V533.5H715.0V530.5H718.0V528.5H720.0V525.5H722.0V523.5H724.0V520.5H725.0V518.5H727.0V515.5H728.0V513.5H729.0V510.5H731.0V508.5H732.0V506.5H733.0V503.5H734.0V501.5H735.0V498.5H736.0V496.5H737.0V493.5H738.0V491.5H739.0V488.5H740.0V484.5H741.0V481.5H742.0V479.5H743.0V476.5H744.0V474.5H745.0V471.5H746.0V469.5H747.0V464.5H748.0V461.5H749.0V459.5H751.0V457.5H752.0V452.5H753.0V449.5H754.0V447.5H755.0V444.5H756.0V442.5H757.0V437.5H758.0V435.5H759.0V432.5H760.0V430.5H761.0V427.5H762.0V425.5H763.0V422.5H764.0V420.5H765.0V417.5H766.0V415.5H767.0V412.5H768.0V410.5H769.0V408.5H770.0V405.5H772.0V403.5H773.0V400.5H774.0V398.5H776.0V395.5H777.0V393.5H779.0V390.5H782.0V388.5H785.0V386.5H795.0V388.5H798.0V390.5H801.0V393.5H802.0V395.5H804.0V398.5H806.0V400.5H807.0V403.5H808.0V405.5H810.0V408.5H811.0V410.5H812.0V412.5H813.0V415.5H814.0V417.5H815.0V420.5H816.0V422.5H817.0V425.5H818.0V427.5H819.0V430.5H820.0V432.5H821.0V435.5H822.0V439.5H823.0V442.5H824.0V444.5H825.0V447.5H826.0V449.5H827.0V452.5H828.0V457.5H829.0V459.5H831.0V461.5H832" fill="none" stroke="#ffff00" stroke-width="1" shape-rendering="crispEdges"/>
<path d="M32.0 573.5H33.0V576.5H34.0V578.5H35.0V581.5H36.0V586.5H37.0V588.5H38.0V591.5H40.0V595.5H41.0V598.5H42.0V600.5H43.0V603.5H44.0V608.5H45.0V610.5H46.0V612.5H47.0V615.5H48.0V617.5H49.0V622.5H50.0V625.5H51.0V627.5H52.0V629.5H53.0V632.5H54.0V634.5H55.0V637.5H56.0V639.5H57.0V642.5H58.0V644.5H59.0V646.5H61.0V649.5H62.0V651.5H63.0V654.5H65.0V656.5H66.0V659.5H68.0V661.5H70.0V664.5H73.0V666.5H85.0V664.5H87.0V661.5H90.0V659.5H91.0V656.5H93.0V654.5H94.0V651.5H96.0V649.5H97.0V646.5H98.0V644.5H99.0V642.5H101.0V639.5H102.0V637.5H103.0V634.5H104.0V632.5H105.0V627.5H106.0V625.5H107.0V622.5H108.0V620.5H109.0V617.5H110.0V615.5H111.0V612.5H112.0V608.5H113.0V605.5H114.0V603.5H115.0V600.5H116.0V595.5H117.0V593.5H118.0V591.5H120.0V588.5H121.0V583.5H122.0V581.5H123.0V578.5H124.0V576.5H125.0V571.5H126.0V569.5H127.0V566.5H128.0V564.5H129.0V561.5H130.0V559.5H131.0V554.5H132.0V552.5H133.0V549.5H134.0V547.5H135.0V544.5H136.0V542.5H137.0V539.5H138.0V537.5H140.0V535.5H141.0V532.5H142.0V530.5H143.0V527.5H145.0V525.5H146.0V522.5H148.0V520.5H150.0V517.5H153.0V515.5H165.0V517.5H168.0V520.5H170.0V522.5H172.0V525.5H173.0V527.5H175.0V530.5H176.0V532.5H177.0V535.5H178.0V537.5H180.0V539.5H181.0V542.5H182.0V544.5H183.0V547.5H184.0V549.5H185.0V552.5H186.0V554.5H187.0V559.5H188.0V561.5H189.0V564.5H190.0V566.5H191.0V569.5H192.0V571.5H193.0V576.5H194.0V578.5H195.0V581.5H196.0V583.5H197.0V588.5H198.0V591.5H200.0V593.5H201.0V595.5H202.0V600.5H203.0V603.5H204.0V605.5H205.0V608.5H206.0V612.5H207.0V615.5H208.0V617.5H209.0V620.5H210.0V622.5H211.0V625.5H212.0V627.5H213.0V632.5H214.0V634.5H215.0V637.5H216.0V639.5H217.0V642.5H219.0V644.5H220.0V646.5H221.0V649.5H222.0V651.5H224.0V654.5H225.0V656.5H227.0V659.5H228.0V661.5H231.0V664.5H233.0V666.5H245.0V664.5H248.0V661.5H250.0V659.5H252.0V656.5H253.0V654.5H255.0V651.5H256.0V649.5H257.0V646.5H259.0V644.5H260.0V642.5H261.0V639.5H262.0V637.5H263.0V634.5H264.0V632.5H265.0V629.5H266.0V627.5H267.0V625.5H268.0V622.5H269.0V617.5H270.0V615.5H271.0V612.5H272.0V610.5H273.0V608.5H274.0V603.5H275.0V600.5H276.0V598.5H277.0V595.5H278.0V591.5H280.0V588.5H281.0V586.5H282.0V581.5H283.0V578.5H284.0V576.5H285.0V573.5H286.0V571.5H287.0V566.5H288.0V564.5H289.0V561.5H290.0V559.5H291.0V556.5H292.0V554.5H293.0V552.5H294.0V549.5H295.0V547.5H296.0V544.5H297.0V542.5H298.0V539.5H299.0V537.5H300.0V535.5H301.0V532.5H302.0V530.5H304.0V527.5H305.0V525.5H307.0V522.5H309.0V520.5H311.0V517.5H314.0V515.5H325.0V517.5H328.0V520.5H330.0V522.5H332.0V525.5H334.0V527.5H335.0V530.5H336.0V532.5H338.0V535.5H339.0V537.5H340.0V539.5H341.0V542.5H342.0V544.5H343.0V547.5H344.0V549.5H345.0V552.5H346.0V554.5H347.0V556.5H348.0V559.5H349.0V561.5H350.0V566.5H351.0V569.5H352.0V571.5H353.0V573.5H354.0V576.5H355.0V581.5H356.0V583.5H357.0V586.5H358.0V588.5H359.0V591.5H360.0V593.5H361.0V595.5H362.0V598.5H363.0V603.5H364.0V605.5H365.0V608.5H366.0V610.5H367.0V612.5H368.0V617.5H369.0V620.5H370.0V622.5H371.0V625.5H372.0V627.5H373.0V629.5H374.0V632.5H375.0V634.5H376.0V637.5H377.0V639.5H378.0V642.5H379.0V644.5H380.0V646.5H381.0V649.5H383.0V651.5H384.0V654.5H385.0V656.5H387.0V659.5H389.0V661.5H391.0V664.5H394.0V666.5H405.0V664.5H408.0V661.5H410.0V659.5H412.0V656.5H414.0V654.5H415.0V651.5H417.0V649.5H418.0V646.5H419.0V644.5H420.0V642.5H421.0V639.5H422.0V637.5H423.0V634.5H424.0V632.5H425.0V629.5H426.0V627.5H427.0V625.5H428.0V622.5H429.0V620.5H430.0V617.5H431.0V612.5H432.0V610.5H433.0V608.5H434.0V605.5H435.0V603.5H436.0V598.5H437.0V595.5H438.0V593.5H439.0V591.5H440.0V588.5H441.0V586.5H442.0V583.5H443.0V581.5H444.0V576.5H445.0V573.5H446.0V571.5H447.0V569.5H448.0V566.5H449.0V564.5H450.0V559.5H451.0V556.5H452.0V554.5H453.0V552.5H454.0V549.5H455.0V547.5H456.0V544.5H457.0V542.5H458.0V539.5H459.0V537.5H460.0V535.5H461.0V532.5H463.0V530.5H464.0V527.5H466.0V525.5H467.0V522.5H469.0V520.5H471.0V517.5H474.0V515.5H485.0V517.5H488.0V520.5H491.0V522.5H492.0V525.5H494.0V527.5H495.0V530.5H497.0V532.5H498.0V535.5H499.0V537.5H500.0V539.5H501.0V542.5H502.0V544.5H503.0V547.5H504.0V549.5H505.0V552.5H506.0V554.5H507.0V556.5H508.0V559.5H509.0V561.5H510.0V564.5H511.0V566.5H512.0V571.5H513.0V573.5H514.0V576.5H515.0V578.5H516.0V581.5H517.0V586.5H518.0V588.5H519.0V591.5H521.0V595.5H522.0V598.5H523.0V600.5H524.0V603.5H525.0V608.5H526.0V610.5H527.0V612.5H528.0V615.5H529.0V617.5H530.0V620.5H531.0V625.5H532.0V627.5H533.0V629.5H534.0V632.5H535.0V634.5H536.0V637.5H537.0V639.5H538.0V642.5H539.0V644.5H540.0V646.5H542.0V649.5H543.0V651.5H544.0V654.5H546.0V656.5H547.0V659.5H549.0V661.5H551.0V664.5H554.0V666.5H566.0V664.5H569.0V661.5H571.0V659.5H573.0V656.5H574.0V654.5H576.0V651.5H577.0V649.5H578.0V646.5H579.0V644.5H580.0V642.5H582.0V639.5H583.0V637.5H584.0V634.5H585.0V632.5H586.0V629.5H587.0V625.5H588.0V622.5H589.0V620.5H590.0V617.5H591.0V615.5H592.0V612.5H593.0V608.5H594.0V605.5H595.0V603.5H596.0V600.5H597.0V598.5H598.0V593.5H599.0V591.5H601.0V588.5H602.0V583.5H603.0V581.5H604.0V578.5H605.0V576.5H606.0V571.5H607.0V569.5H608.0V566.5H609.0V564.5H610.0V561.5H611.0V559.5H612.0V556.5H613.0V552.5H614.0V549.5H615.0V547.5H616.0V544.5H617.0V542.5H618.0V539.5H619.0V537.5H621.0V535.5H622.0V532.5H623.0V530.5H624.0V527.5H626.0V525.5H627.0V522.5H629.0V520.5H631.0V517.5H634.0V515.5H646.0V517.5H649.0V520.5H651.0V522.5H653.0V525.5H654.0V527.5H656.0V530.5H657.0V532.5H658.0V535.5H660.0V537.5H661.0V539.5H662.0V542.5H663.0V544.5H664.0V547.5H665.0V549.5H666.0V552.5H667.0V554.5H668.0V556.5H669.0V561.5H670.0V564.5H671.0V566.5H672.0V569.5H673.0V571.5H674.0V573.5H675.0V578.5H676.0V581.5H677.0V583.5H678.0V586.5H679.0V591.5H681.0V593.5H682.0V595.5H683.0V600.5H684.0V603.5H685.0V605.5H686.0V608.5H687.0V612.5H688.0V615.5H689.0V617.5H690.0V620.5H691.0V622.5H692.0V625.5H693.0V627.5H694.0V629.5H695.0V632.5H696.0V634.5H697.0V637.5H698.0V639.5H699.0V642.5H700.0V644.5H701.0V646.5H702.0V649.5H703.0V651.5H705.0V654.5H706.0V656.5H708.0V659.5H709.0V661.5H712.0V664.5H715.0V666.5H726.0V664.5H729.0V661.5H731.0V659.5H733.0V656.5H734.0V654.5H736.0V651.5H737.0V649.5H739.0V646.5H740.0V644.5H741.0V642.5H742.0V639.5H743.0V637.5H744.0V634.5H745.0V632.5H746.0V629.5H747.0V627.5H748.0V625.5H749.0V622.5H750.0V617.5H751.0V615.5H752.0V612.5H753.0V610.5H754.0V608.5H755.0V605.5H756.0V600.5H757.0V598.5H758.0V595.5H759.0V593.5H760.0V591.5H761.0V588.5H762.0V586.5H763.0V583.5H764.0V578.5H765.0V576.5H766.0V573.5H767.0V571.5H768.0V569.5H769.0V564.5H770.0V561.5H771.0V559.5H772.0V556.5H773.0V554.5H774.0V552.5H775.0V549.5H776.0V547.5H777.0V544.5H778.0V542.5H779.0V539.5H780.0V537.5H781.0V535.5H782.0V532.5H783.0V530.5H785.0V527.5H786.0V525.5H788.0V522.5H790.0V520.5H792.0V517.5H795.0V515.5H806.0V517.5H809.0V520.5H811.0V522.5H813.0V525.5H815.0V527.5H816.0V530.5H817.0V532.5H819.0V535.5H820.0V537.5H821.0V539.5H822.0V542.5H823.0V544.5H824.0V547.5H825.0V549.5H826.0V552.5H827.0V554.5H828.0V556.5H829.0V559.5H830.0V561.5H831.0V564.5H832" fill="none" stroke="#00ffff" stroke-width="1" shape-rendering="crispEdges"/>
<path d="M31.5 333.0 L38.5 342.0 L46.0 340.5 L50.5 336.5 L54.5 333.0 L55.5 309.5 L56.5 292.0 L57.2 275.0 L58.6 259.0 L59.3 242.0 L60.3 225.0 L61.3 209.0 L62.5 200.0 L63.5 209.0 L64.4 225.0 L65.4 240.0 L66.3 256.0 L67.6 271.0 L68.5 287.0 L69.6 303.0 L70.2 326.0 L78.4 335.3 L85.0 337.0 L95.7 337.0 L101.7 340.5 L120.2 340.5 L126.2 342.4 L132.2 340.5 L144.0 340.5 L149.4 342.4 L831.0 342.4" fill="none" stroke="#ff0000" stroke-width="1.25"/>
</svg>
<svg class="a" style="left:12px;top:337px" width="18" height="11"><path d="M0 0 H12 L17.5 5.5 L12 11 H0 Z" fill="#ff0000"/><text x="7" y="9.5" text-anchor="middle" font-family="Liberation Sans" font-size="10" font-weight="bold" fill="#200000">M</text></svg>
<svg class="a" style="left:12px;top:451px" width="18" height="11"><path d="M0 0 H12 L17.5 5.5 L12 11 H0 Z" fill="#ffff00"/><text x="7.5" y="9.5" text-anchor="middle" font-family="Liberation Sans" font-size="10" fill="#301000">1</text></svg>
<svg class="a" style="left:12px;top:583px" width="18" height="11"><path d="M0 0 H12 L17.5 5.5 L12 11 H0 Z" fill="#00ffff"/><text x="7.5" y="9.5" text-anchor="middle" font-family="Liberation Sans" font-size="10" fill="#001020">2</text></svg>
<svg class="a" style="left:835px;top:451px" width="18" height="11"><path d="M17.5 0 H5.5 L0 5.5 L5.5 11 H17.5 Z" fill="#ffff00"/><text x="11" y="9.5" text-anchor="middle" font-family="Liberation Sans" font-size="10" fill="#102000">T</text></svg>
<div class="t" style="left:52px;top:686px;color:#e80000">FFT :</div><div class="t" style="left:85px;top:686px;color:#e80000;letter-spacing:-0.15px">50.0mV / DIV</div><div class="t" style="left:173px;top:686px;color:#e80000;letter-spacing:-0.15px">10.00KHz / DIV</div><div class="t" style="left:271px;top:686px;color:#e80000;letter-spacing:-0.1px">Sa. Rate : 2.00MSa/s</div>
<div class="a" style="left:31px;top:715px;width:92px;height:19px;background:#000"></div>
<div class="a" style="left:31px;top:715px;width:28px;height:17px;background:#ffff00"></div>
<div class="t" style="left:32px;top:718px;color:#000">CH1</div>
<div class="t" style="left:60px;top:718px;color:#ffff00">∿&nbsp; 100mV</div>
<div class="a" style="left:141px;top:715px;width:92px;height:19px;background:#000"></div>
<div class="t" style="left:143px;top:718px;color:#00ffff">CH2 ∿&nbsp; 100mV</div>
<div class="a" style="left:742px;top:715px;width:90px;height:19px;background:#000"></div>
<div class="t" style="left:745px;top:718px;color:#ff8000;font-size:12.4px">Time: 500.0us</div>


<div class="a" id="panel"></div>
<svg width="0" height="0" style="position:absolute"><defs><linearGradient id="kg" x1="0.2" y1="0.1" x2="0.8" y2="0.9"><stop offset="0" stop-color="#d0d0d0"/><stop offset="1" stop-color="#858585"/></linearGradient></defs></svg>
<div class="a" style="left:855px;top:121px;width:192px;height:617px;border-left:1px solid #8a9099;border-top:1px solid #8a9099;box-shadow:inset 1px 1px 0 #fff"></div>
<div class="t" style="left:882px;top:100px">联机:</div>
<div class="a" style="left:913px;top:97px;width:21px;height:21px;border-radius:50%;background:#ff8000;border:1px solid #b05a00"></div>
<!-- scrollbar -->
<div class="a" style="left:1034px;top:122px;width:13px;height:616px;background:#ececec;border-left:1px solid #e4e4e4"></div>
<svg class="a" style="left:1034px;top:126px" width="13" height="10"><path d="M4.8 7.5 L8.4 3.8 L12 7.5 Z" fill="#2a2a2a"/></svg>
<div class="a" style="left:1034px;top:140px;width:13px;height:453px;background:linear-gradient(90deg,#f6f6f6,#e8e8e8 45%,#cfcfcf);border-left:1px solid #9a9a9a;border-top:1px solid #9a9a9a;border-bottom:1px solid #9a9a9a"></div>
<svg class="a" style="left:1037px;top:362px" width="9" height="9"><path d="M1 1.5 H8 M1 4.5 H8 M1 7.5 H8" stroke="#555"/></svg>
<!-- groupbox 水平 -->
<div class="gb" style="left:861px;top:133px;width:168px;height:111px"></div>
<div class="gbt" style="left:868px;top:126px">水平</div>
<div class="t" style="left:864px;top:147px">秒 / 格</div>
<div class="cb" style="left:864px;top:166px;width:68px">500.0us</div>
<div class="t" style="left:864px;top:195px">格式</div>
<div class="cb" style="left:864px;top:215px;width:68px">Y - T</div>
<svg class="a" style="left:940px;top:159px" width="80" height="80">
 <path d="M12 66 A37.5 37.5 0 1 1 68 66" fill="none" stroke="#222" stroke-width="1"/>
 <path d="M13.5 65 A35.5 35.5 0 1 1 66.5 65" fill="none" stroke="#fff" stroke-width="1.5"/>
 <path d="M8 72 L15 66 M72 72 L65 66" stroke="#111" stroke-width="1.2"/>
 <circle cx="40" cy="40" r="34.3" fill="url(#kg)" stroke="#6e6e6e" stroke-width="1"/>
 <circle cx="40" cy="40" r="28.3" fill="#0000c8" stroke="#000080" stroke-width="2.8"/>
 <path d="M45 18 L41.5 34" stroke="#e8e8e8" stroke-width="2"/>
</svg>
<!-- groupbox 垂直 -->
<div class="gb" style="left:861px;top:258px;width:168px;height:149px"></div>
<div class="gbt" style="left:868px;top:250px">垂直</div>
<div class="cb" style="left:864px;top:274px;width:68px">CH1</div>
<div class="a" style="left:937px;top:277px;width:13px;height:13px;border:1px solid #8f8f8f;background:linear-gradient(#dedede,#fafafa)"></div>
<svg class="a" style="left:937px;top:276px" width="13" height="13"><path d="M3 7 L5.5 10 L10 2.5" stroke="#3a4f8a" stroke-width="1.6" fill="none"/></svg>
<div class="t" style="left:953px;top:276px">开/关</div>
<div class="a" style="left:864px;top:303px;width:68px;height:20px;border:1px solid #d0d0d0;background:#f7f7f7"></div>
<div class="t" style="left:868px;top:305px;font-size:11px">100mV</div>
<div class="a" style="left:914px;top:304px;width:17px;height:9px;border:1px solid #c5c5c5;background:linear-gradient(#f6f6f6,#e2e2e2)"></div>
<div class="a" style="left:914px;top:313px;width:17px;height:9px;border:1px solid #c5c5c5;background:linear-gradient(#f6f6f6,#e2e2e2)"></div>
<svg class="a" style="left:914px;top:304px" width="17" height="18"><path d="M5.5 6 L8.5 3 L11.5 6 Z M5.5 12 L8.5 15 L11.5 12 Z" fill="#4a6aa8"/></svg>
<div class="cb" style="left:864px;top:330px;width:68px">交流</div>
<div class="cb" style="left:864px;top:358px;width:68px">x1</div>
<svg class="a" style="left:941px;top:299px" width="80" height="80">
 <path d="M12 66 A37.5 37.5 0 1 1 68 66" fill="none" stroke="#222" stroke-width="1"/>
 <path d="M13.5 65 A35.5 35.5 0 1 1 66.5 65" fill="none" stroke="#fff" stroke-width="1.5"/>
 <path d="M8 72 L15 66 M72 72 L65 66" stroke="#111" stroke-width="1.2"/>
 <circle cx="40" cy="40" r="34.3" fill="url(#kg)" stroke="#6e6e6e" stroke-width="1"/>
 <circle cx="40" cy="40" r="28.3" fill="#ffff00" stroke="#8a8a00" stroke-width="2.6"/>
 <path d="M45 18 L41.5 34" stroke="#e8e8e8" stroke-width="2"/>
</svg>
<!-- groupbox 触发 -->
<div class="gb" style="left:861px;top:421px;width:168px;height:240px"></div>
<div class="gbt" style="left:867px;top:413px">触发</div>
<div class="t" style="left:864px;top:440px">触发模式</div>
<div class="t" style="left:864px;top:470px">触发方式</div>
<div class="t" style="left:864px;top:500px">触发信源</div>
<div class="t" style="left:864px;top:529px">边沿类型</div>
<div class="cb" style="left:951px;top:436px;width:68px">边沿</div>
<div class="cb" style="left:951px;top:465px;width:68px">自动</div>
<div class="cb" style="left:951px;top:496px;width:68px">CH1</div>
<div class="cb" style="left:952px;top:526px;width:68px">+</div>
<!-- 波形移动 -->
<div class="gb" style="left:858px;top:701px;width:165px;height:40px"></div>
<div class="gbt" style="left:862px;top:693px">波形移动</div>
<div class="t" style="left:857px;top:712px;color:#9a9a9a">数据长度</div>
<div class="a" style="left:945px;top:707px;width:68px;height:19px;border:1px solid #c8c8c8;background:#f0f0f0"></div>
<div class="t" style="left:966px;top:710px;color:#a0a0a0;font-size:11px">4096</div>


<div class="a" id="status"></div>
<div class="t" style="left:10px;top:742px">已连接</div>
<div class="a" style="left:919px;top:741px;width:1px;height:17px;background:#c8c8c8"></div>
<div class="t" style="left:925px;top:742px;font-size:12.8px">22-02-2016</div><div class="t" style="left:998px;top:742px;font-size:12.8px">11:17</div>
<svg class="a" style="left:1036px;top:746px" width="11" height="11"><g fill="#8a8a8a"><rect x="7" y="1" width="2" height="2"/><rect x="4" y="4" width="2" height="2"/><rect x="7" y="4" width="2" height="2"/><rect x="1" y="7" width="2" height="2"/><rect x="4" y="7" width="2" height="2"/><rect x="7" y="7" width="2" height="2"/></g></svg>
</body></html>
